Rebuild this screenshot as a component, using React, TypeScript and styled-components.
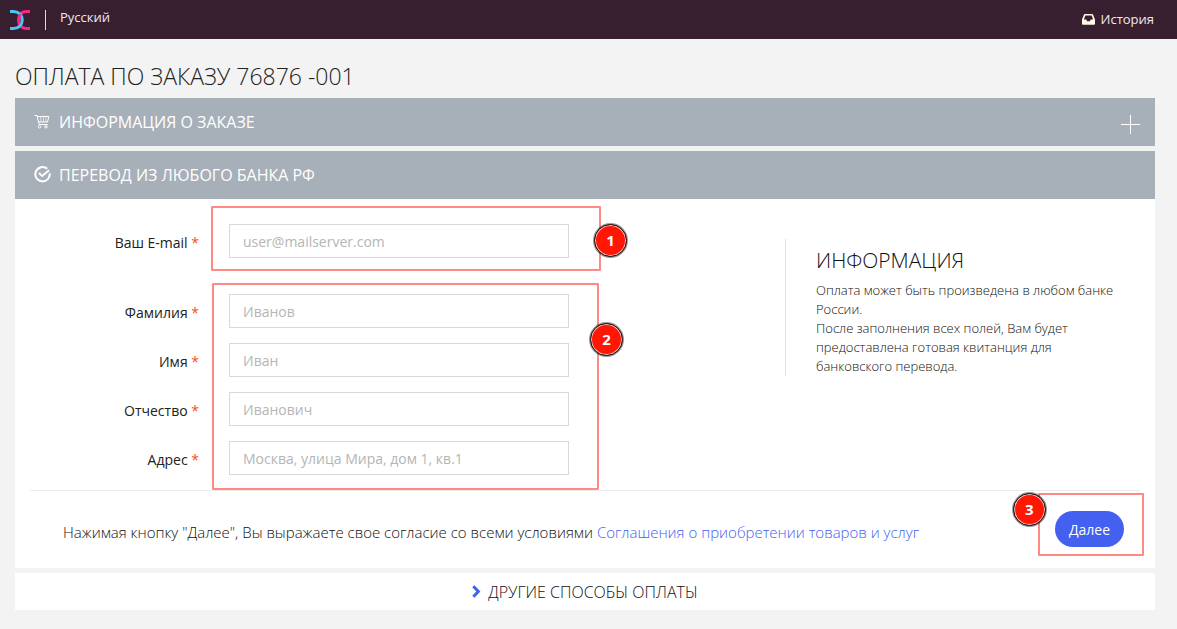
import React from 'react';
import styled, { createGlobalStyle } from 'styled-components';

const GlobalStyle = createGlobalStyle`
  *, *::before, *::after { box-sizing: border-box; }
  body {
    margin: 0;
    background: #f3f3f3;
    color: #212121;
    font-family: 'Open Sans', 'Noto Sans', sans-serif;
    font-size: 14px;
    line-height: 20px;
  }
  h1, h2, p { margin: 0; }
`;

const Header = styled.header`
  display: flex;
  align-items: center;
  height: 39px;
  padding: 0 23px 0 10px;
  background: #371f30;
`;

const LogoLink = styled.a`
  display: flex;
  height: 20px;
  padding-right: 15px;
  border-right: 1px solid #ded9dc;
`;

const HeaderLink = styled.a<{ $end?: boolean }>`
  display: flex;
  align-items: center;
  gap: 6px;
  margin-left: ${(p) => (p.$end ? 'auto' : '14px')};
  padding-bottom: ${(p) => (p.$end ? '1px' : '5px')};
  color: #f3e9ea;
  font-size: 13px;
  text-decoration: none;
`;

const Main = styled.main`
  padding: 20px 22px 19px 15px;
`;

const Title = styled.h1`
  margin-bottom: 5px;
  font-size: 23px;
  font-weight: 300;
  line-height: 34px;
`;

const Bar = styled.h2`
  display: flex;
  align-items: center;
  height: 48px;
  padding: 0 15px 0 19px;
  background: #a7afb9;
  color: #fff;
  font-size: 16px;
  font-weight: 400;
`;

const BarButton = styled.button`
  display: flex;
  flex: 1;
  align-items: center;
  gap: 8px;
  padding: 0;
  border: 0;
  background: none;
  color: inherit;
  font: inherit;
  text-align: left;
  cursor: pointer;
`;

const BarLabel = styled.span`
  display: flex;
  flex: 1;
  align-items: center;
  gap: 8px;
`;

const PlusIcon = styled.svg`
  margin-left: auto;
  margin-top: 5px;
`;

const Section = styled.section`
  margin-bottom: 5px;
`;

const Panel = styled.form`
  padding: 25px 15px 21px;
  background: #fff;
`;

const Columns = styled.div`
  display: flex;
  justify-content: space-between;
  padding-bottom: 15px;
  border-bottom: 1px solid #ececec;
`;

const Fields = styled.div`
  flex: 0 1 539px;
  display: flex;
  flex-direction: column;
  gap: 36px;
`;

const FieldGroup = styled.div`
  position: relative;
  display: flex;
  flex-direction: column;
  gap: 15px;
`;

const Field = styled.div`
  display: grid;
  grid-template-columns: 169px minmax(0, 1fr);
  column-gap: 30px;
  align-items: center;
`;

const Label = styled.label`
  padding-top: 3px;
  text-align: right;
`;

const Required = styled.span`
  color: #f4511e;
`;

const Input = styled.input`
  width: 100%;
  height: 34px;
  padding: 0 13px;
  border: 1px solid #d9d9d9;
  background: #fff;
  color: #212121;
  font: inherit;
  &::placeholder { color: #b5b5b5; opacity: 1; }
`;

const Info = styled.aside`
  flex: 0 0 355px;
  align-self: flex-start;
  margin-top: 15px;
  padding: 7px 25px 0 30px;
  border-left: 1px solid #e4e4e4;
  color: #111;
  font-size: 13px;
  font-weight: 300;
  line-height: 19px;
`;

const InfoTitle = styled.h2`
  margin-bottom: 7px;
  color: #111;
  font-size: 21px;
  font-weight: 300;
  line-height: 28px;
`;

const Footer = styled.div`
  display: flex;
  align-items: center;
  justify-content: space-between;
  padding: 20px 16px 0 33px;
`;

const Consent = styled.p`
  padding-top: 6px;
  color: #111;
  font-size: 15px;
  font-weight: 300;
  a { color: #4460f1; text-decoration: none; }
`;

const SubmitWrap = styled.div`
  position: relative;
`;

const Submit = styled.button`
  display: block;
  height: 36px;
  padding: 2px 14px 0;
  border: 0;
  border-radius: 18px;
  background: #4460f1;
  color: #fff;
  font: inherit;
  cursor: pointer;
`;

const Outline = styled.div<{ $inset: string }>`
  position: absolute;
  inset: ${(p) => p.$inset};
  border: 2px solid #ff8a84;
  border-radius: 1px;
  pointer-events: none;
`;

const Badge = styled.span<{ $x: string; $y: string }>`
  position: absolute;
  left: ${(p) => p.$x};
  top: ${(p) => p.$y};
  display: flex;
  align-items: center;
  justify-content: center;
  width: 33px;
  height: 33px;
  padding-bottom: 2px;
  border: 1px solid #111;
  border-radius: 50%;
  background: #ff1605;
  box-shadow: inset 0 0 0 1px #f6c9c6, 0 0 0 1px rgba(0, 0, 0, 0.4);
  color: #fff;
  font-family: 'Noto Sans', 'Open Sans', sans-serif;
  font-size: 15px;
  font-weight: 700;
`;

const OtherMethods = styled.button`
  display: flex;
  align-items: center;
  justify-content: center;
  gap: 7px;
  width: 100%;
  height: 37px;
  padding: 0;
  border: 0;
  background: #fff;
  color: #111;
  font-family: inherit;
  font-size: 16px;
  font-weight: 300;
  cursor: pointer;
`;

type FieldProps = { id: string; label: string; placeholder: string; type?: string };

function FormField({ id, label, placeholder, type = 'text' }: FieldProps) {
  return (
    <Field>
      <Label htmlFor={id}>
        {label} <Required>*</Required>
      </Label>
      <Input id={id} name={id} type={type} placeholder={placeholder} required />
    </Field>
  );
}

const personFields: FieldProps[] = [
  { id: 'surname', label: 'Фамилия', placeholder: 'Иванов' },
  { id: 'name', label: 'Имя', placeholder: 'Иван' },
  { id: 'patronymic', label: 'Отчество', placeholder: 'Иванович' },
  { id: 'address', label: 'Адрес', placeholder: 'Москва, улица Мира, дом 1, кв.1' },
];

const Logo = () => (
  <svg width="20" height="20" viewBox="0 0 20 20" fill="none" strokeWidth="3" aria-hidden="true">
    <path d="M20 1.500h-3.500C11.500 1.500 8.700 5 8.700 10s2.800 8.500 7.800 8.500H20" stroke="#fa2586" />
    <path d="M0 1.500h3.500C8.500 1.500 12.300 5 12.300 10s-3.800 8.500-8.800 8.500H0" stroke="#4cc4ed" />
    <path d="M10.400 4.400C9.200 5.900 8.700 7.700 8.700 10c0 1 .1 2 .4 2.900" stroke="#fa2586" />
  </svg>
);

const InboxIcon = () => (
  <svg width="13" height="11" viewBox="0 0 13 11" aria-hidden="true">
    <path
      fill="#fffbe9"
      fillRule="evenodd"
      d="M3 0h7c.7 0 1 .3 1.200.9L13 5.500V9.500c0 .9-.4 1.300-1.200 1.300H1.200C.4 10.800 0 10.400 0 9.500v-4L1.800.9C2 .3 2.300 0 3 0zm.3 1.600L1.900 5.500h2.300l.9 1.800h2.800l.9-1.800h2.300L9.700 1.600z"
    />
  </svg>
);

const CartIcon = () => (
  <svg width="17" height="17" viewBox="0 0 17 17" fill="none" stroke="#fff" aria-hidden="true">
    <path d="M.5 1.500H3l2.200 9h8.500M3.300 2.500h11.500l-1.300 5.500H4.800" />
    <path d="M6.500 2.500l.5 5.500M9.500 2.500V8M12 2.500L11.700 8" strokeWidth=".6" />
    <circle cx="5.500" cy="12.800" r="1.200" />
    <circle cx="12" cy="12.800" r="1.200" />
  </svg>
);

const CheckIcon = () => (
  <svg width="17" height="19" viewBox="0 0 17 19" fill="none" stroke="#fff" aria-hidden="true">
    <path d="M13.300 2.800A7.200 7.200 0 1 0 15.700 7.300" strokeWidth="2" />
    <path d="M5 7l3.200 3L15 4.300" strokeWidth="2" />
  </svg>
);

export default function App() {
  return (
    <>
      <GlobalStyle />
      <Header>
        <LogoLink href="#" aria-label="Главная">
          <Logo />
        </LogoLink>
        <HeaderLink href="#lang">Русский</HeaderLink>
        <HeaderLink href="#history" $end>
          <InboxIcon />
          История
        </HeaderLink>
      </Header>
      <Main>
        <Title>ОПЛАТА ПО ЗАКАЗУ 76876 -001</Title>
        <Section>
          <Bar>
            <BarButton type="button" aria-expanded="false">
              <CartIcon />
              ИНФОРМАЦИЯ О ЗАКАЗЕ
              <PlusIcon width="19" height="19" viewBox="0 0 19 19" stroke="#fff" aria-hidden="true">
                <path d="M0 9.500h19M9.500 0v19" />
              </PlusIcon>
            </BarButton>
          </Bar>
        </Section>
        <Section>
          <Bar>
            <BarLabel>
              <CheckIcon />
              ПЕРЕВОД ИЗ ЛЮБОГО БАНКА РФ
            </BarLabel>
          </Bar>
          <Panel onSubmit={(e) => e.preventDefault()}>
            <Columns>
              <Fields>
                <FieldGroup>
                  <FormField id="email" type="email" label="Ваш E-mail" placeholder="user@mailserver.com" />
                  <Outline $inset="-18px -32px -13px 181px" />
                  <Badge $x="calc(100% + 25px)" $y="0px">1</Badge>
                </FieldGroup>
                <FieldGroup>
                  {personFields.map((f) => (
                    <FormField key={f.id} {...f} />
                  ))}
                  <Outline $inset="-11px -30px -15px 182px" />
                  <Badge $x="calc(100% + 21px)" $y="29px">2</Badge>
                </FieldGroup>
              </Fields>
              <Info>
                <InfoTitle>ИНФОРМАЦИЯ</InfoTitle>
                <p>Оплата может быть произведена в любом банке России.</p>
                <p>После заполнения всех полей, Вам будет предоставлена готовая квитанция для банковского перевода.</p>
              </Info>
            </Columns>
            <Footer>
              <Consent>
                Нажимая кнопку "Далее", Вы выражаете свое согласие со всеми условиями{' '}
                <a href="#terms">Соглашения о приобретении товаров и услуг</a>
              </Consent>
              <SubmitWrap>
                <Submit type="submit">Далее</Submit>
                <Outline $inset="-18px -20px -9px -17px" />
                <Badge $x="-42px" $y="-18px">3</Badge>
              </SubmitWrap>
            </Footer>
          </Panel>
        </Section>
        <OtherMethods type="button">
          <svg width="9" height="13" viewBox="0 0 9 13" fill="none" stroke="#4460f1" strokeWidth="3" aria-hidden="true">
            <path d="M1.300 1.300l5 5.200-5 5.200" />
          </svg>
          ДРУГИЕ СПОСОБЫ ОПЛАТЫ
        </OtherMethods>
      </Main>
    </>
  );
}
